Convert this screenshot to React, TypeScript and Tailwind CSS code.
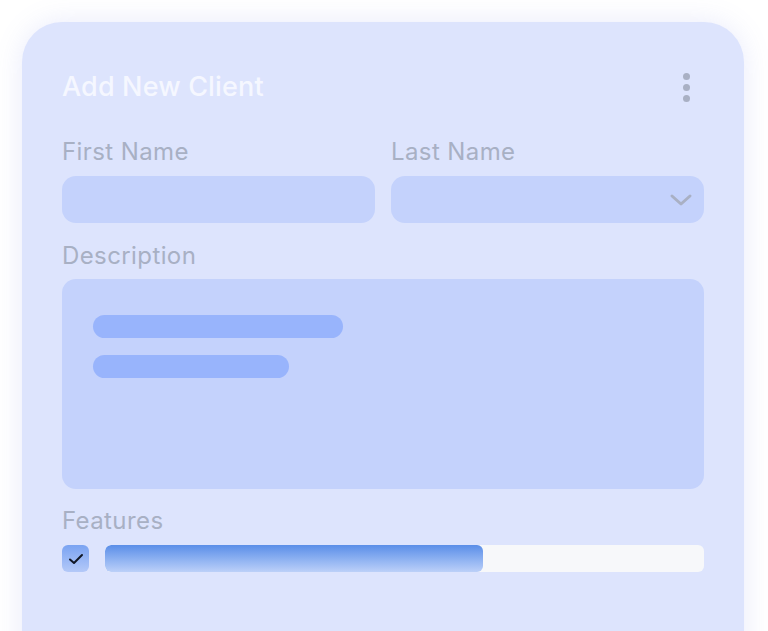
import React from "react";

export default function App() {
  return (
    <div
      className="w-[768px] h-[631px] bg-white overflow-hidden pt-[22px] pl-[22px]"
      style={{ fontFamily: "Inter, 'Noto Sans', sans-serif" }}
    >
      <div className="w-[722px] h-[660px] rounded-t-[40px] bg-[#dde4fd] shadow-[0_0_28px_rgba(120,130,230,0.16)] px-[40px] pt-[49px]">
        <div className="flex items-center justify-between h-[32px]">
          <div className="text-[27px] font-medium text-[#f5f7ff] tracking-[0.15px]">Add New Client</div>
          <div className="flex flex-col gap-[4px] items-center mr-[14px]">
            <span className="w-[7px] h-[7px] rounded-full bg-[#a9b0c4]" />
            <span className="w-[7px] h-[7px] rounded-full bg-[#a9b0c4]" />
            <span className="w-[7px] h-[7px] rounded-full bg-[#a9b0c4]" />
          </div>
        </div>

        <div className="grid grid-cols-2 gap-x-[16px] mt-[35px]">
          <div>
            <div className="text-[24px] leading-[28px] tracking-[0.4px] text-[#a8b0c4]">First Name</div>
            <div className="mt-[10px] h-[47px] rounded-[14px] bg-[#c4d2fc]" />
          </div>
          <div>
            <div className="text-[24px] leading-[28px] tracking-[0.4px] text-[#a8b0c4]">Last Name</div>
            <div className="mt-[10px] h-[47px] rounded-[14px] bg-[#c4d2fc] flex items-center justify-end pr-[11px]">
              <svg width="24" height="14" viewBox="0 0 24 14" fill="none">
                <path d="M3 3 L12 11 L21 3" stroke="#a9b0c4" strokeWidth="3" strokeLinecap="round" strokeLinejoin="round" />
              </svg>
            </div>
          </div>
        </div>

        <div className="mt-[19px] text-[24px] leading-[28px] tracking-[0.4px] text-[#a8b0c4]">Description</div>
        <div className="mt-[9px] h-[210px] rounded-[14px] bg-[#c4d2fc] pt-[36px] pl-[31px] flex flex-col gap-[17px]">
          <div className="w-[250px] h-[23px] rounded-full bg-[#98b4fc]" />
          <div className="w-[196px] h-[23px] rounded-full bg-[#98b4fc]" />
        </div>

        <div className="mt-[18px] text-[24px] leading-[28px] tracking-[0.4px] text-[#a8b0c4]">Features</div>
        <div className="mt-[10px] flex items-center gap-[16px]">
          <div className="w-[27px] h-[27px] rounded-[6px] bg-gradient-to-b from-[#7aa3f2] to-[#b4c9f8] flex items-center justify-center">
            <svg width="16" height="14" viewBox="0 0 16 14" fill="none">
              <path d="M2 7.5 L6 11 L14 3" stroke="#111827" strokeWidth="2" strokeLinecap="round" strokeLinejoin="round" />
            </svg>
          </div>
          <div className="flex-1 h-[27px] rounded-[6px] bg-[#f7f8fa] overflow-hidden">
            <div className="w-[378px] h-full rounded-[6px] bg-gradient-to-b from-[#5a8ee8] to-[#bcd0f8]" />
          </div>
        </div>
      </div>
    </div>
  );
}
